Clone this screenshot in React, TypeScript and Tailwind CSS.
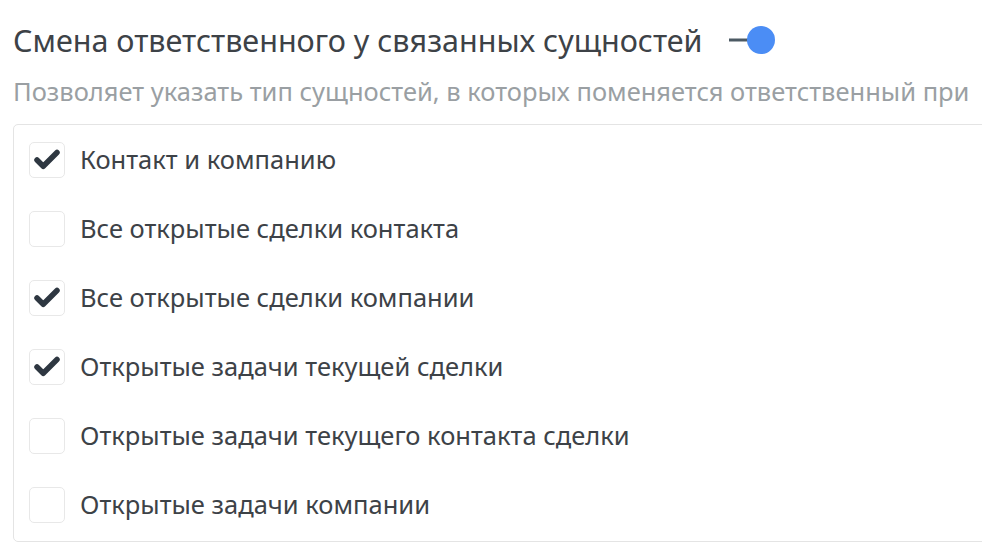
import { Check } from "lucide-react";

const items = [
  { label: "Контакт и компанию", checked: true },
  { label: "Все открытые сделки контакта", checked: false },
  { label: "Все открытые сделки компании", checked: true },
  { label: "Открытые задачи текущей сделки", checked: true },
  { label: "Открытые задачи текущего контакта сделки", checked: false },
  { label: "Открытые задачи компании", checked: false },
];

export default function App() {
  return (
    <div
      className="w-[1004px] h-[555px] bg-white overflow-hidden"
      style={{ fontFamily: '"Noto Sans", "Open Sans", sans-serif' }}
    >
      <div className="w-[982px] overflow-hidden pl-[13px] pt-[22px]">
        <div className="flex items-center h-[36px]">
          <span className="text-[30.5px] text-[#3d4247] leading-none whitespace-nowrap">
            Смена ответственного у связанных сущностей
          </span>
          <svg width="48" height="30" viewBox="0 0 48 30" className="ml-[26px]">
            <line x1="0" y1="15" x2="20" y2="15" stroke="#4b5963" strokeWidth="3" />
            <circle cx="32" cy="15" r="14" fill="#4b8df5" />
          </svg>
        </div>
        <div className="mt-[21px] text-[25.5px] text-[#9a9fa3] leading-none whitespace-nowrap">
          Позволяет указать тип сущностей, в которых поменяется ответственный при
        </div>
        <div className="mt-[19px] w-[1000px] h-[418px] border border-[#e4e4e4] rounded-[5px] pl-[15px] pt-[17px] flex flex-col gap-[33px]">
          {items.map((it) => (
            <div key={it.label} className="flex items-center gap-[15px] h-[36px]">
              <div className="w-[36px] h-[36px] border border-[#e8e8e8] rounded-[5px] flex items-center justify-center">
                {it.checked && <Check size={30} strokeWidth={4.4} color="#2e3741" />}
              </div>
              <span className="text-[25.5px] text-[#3d4247] leading-none whitespace-nowrap">
                {it.label}
              </span>
            </div>
          ))}
        </div>
      </div>
    </div>
  );
}
